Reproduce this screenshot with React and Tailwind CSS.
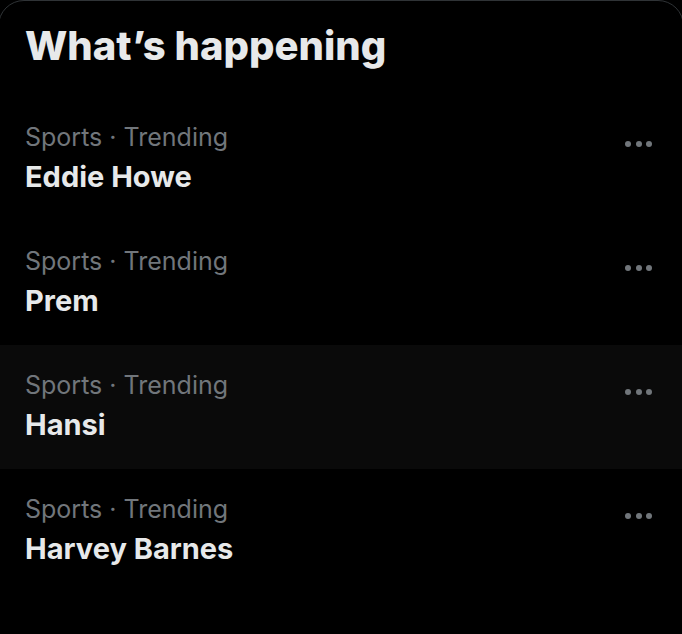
const trends = [
  { category: 'Sports · Trending', name: 'Eddie Howe' },
  { category: 'Sports · Trending', name: 'Prem' },
  { category: 'Sports · Trending', name: 'Hansi', hover: true },
  { category: 'Sports · Trending', name: 'Harvey Barnes' },
]

function MoreDots() {
  return (
    <div className="flex items-center gap-[4.5px]">
      <span className="w-[6px] h-[6px] rounded-full bg-[#71767b]" />
      <span className="w-[6px] h-[6px] rounded-full bg-[#71767b]" />
      <span className="w-[6px] h-[6px] rounded-full bg-[#71767b]" />
    </div>
  )
}

function TrendRow({ category, name, hover }) {
  return (
    <div className={`flex justify-between h-[124px] pl-[26px] pr-[31px] pt-[24px] ${hover ? 'bg-[#0a0a0a]' : ''}`}>
      <div className="flex flex-col">
        <span className="text-[25px] leading-[32px] text-[#71767b]">{category}</span>
        <span className="text-[29px] leading-[48px] font-bold text-[#e7e9ea]">{name}</span>
      </div>
      <div className="pt-[20px]">
        <MoreDots />
      </div>
    </div>
  )
}

export default function App() {
  return (
    <div className="w-[682px] h-[634px] overflow-hidden bg-black" style={{ fontFamily: 'Inter, "Noto Sans", sans-serif' }}>
      <div className="ml-[-2px] w-[686px] h-[700px] rounded-t-[26px] border border-[#2f3336] bg-black">
        <h2 className="pl-[26px] pt-[21px] h-[96px] text-[40px] leading-[48px] font-extrabold text-[#e7e9ea]">
          What’s happening
        </h2>
        {trends.map((t) => (
          <TrendRow key={t.name} {...t} />
        ))}
      </div>
    </div>
  )
}
